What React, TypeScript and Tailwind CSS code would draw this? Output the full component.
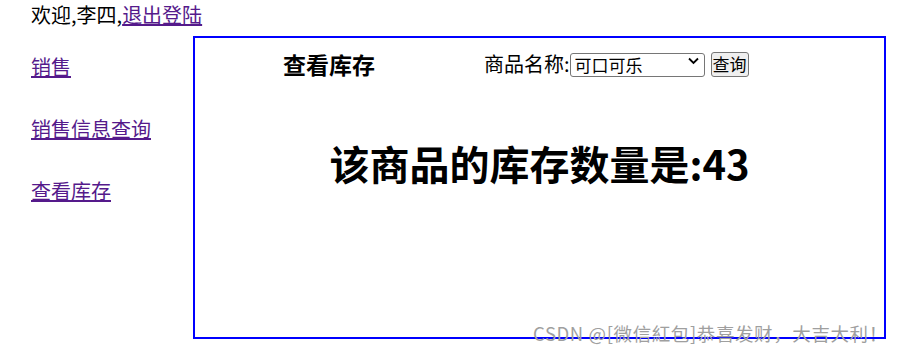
import { useState } from "react";

const font = "font-['Microsoft_YaHei','Noto_Sans_CJK_SC','Noto_Sans',sans-serif]";

const App = () => {
    const [goods, setGoods] = useState<string>("可口可乐");

    return (
        <div className={`relative h-[355px] w-[905px] overflow-hidden bg-white text-[20px] text-black ${font}`}>
            {/* header */}
            <div className="h-[30px] pl-[31px] leading-[30px]">
                欢迎,李四,
                <a href="#" className="text-[#551a8b] underline">退出登陆</a>
            </div>

            <div className="mt-[6px] flex">
                {/* left menu */}
                <div className="flex w-[193px] shrink-0 flex-col items-start gap-[36px] pl-[31px] pt-[18px]">
                    <a href="#" className="leading-[26px] text-[#551a8b] underline">销售</a>
                    <a href="#" className="leading-[26px] text-[#551a8b] underline">销售信息查询</a>
                    <a href="#" className="leading-[26px] text-[#551a8b] underline">查看库存</a>
                </div>

                {/* content */}
                <div className="flex h-[303px] w-[693px] shrink-0 flex-col border-2 border-[#0000ff]">
                    <div className="mt-[12px] flex h-[28px] items-center">
                        <div className="w-[289px] pl-[88px] text-[23px] font-bold leading-[28px]">查看库存</div>
                        <div className="flex items-center">
                            <span className="leading-[28px]">商品名称:</span>
                            <div className="relative">
                                <select
                                    value={goods}
                                    onChange={(e) => setGoods(e.target.value)}
                                    className="h-[24px] w-[135px] appearance-none rounded-[3px] border border-[#767676] bg-white pl-[4px] text-[17px] leading-[22px]"
                                >
                                    <option>可口可乐</option>
                                    <option>百事可乐</option>
                                    <option>雪碧</option>
                                </select>
                                <svg className="pointer-events-none absolute right-[6px] top-[8px]" width="11" height="8" viewBox="0 0 11 8">
                                    <path d="M1 1.5 L5.5 6 L10 1.5" fill="none" stroke="#000" strokeWidth="1.8" />
                                </svg>
                            </div>
                            <button className="ml-[6px] h-[25px] w-[38px] rounded-[3px] border border-[#767676] bg-[#efefef] text-[17px] leading-[22px]">
                                查询
                            </button>
                        </div>
                    </div>

                    <h1 className="mt-[61px] text-center text-[40px] font-bold leading-[48px]">该商品的库存数量是:43</h1>
                </div>
            </div>

            {/* watermark */}
            <div className="absolute left-[533px] top-[320px] whitespace-nowrap text-[18.5px] leading-[26px] tracking-[0.6px] text-[#9f9f9f]">
                CSDN @[微信紅包]恭喜发财，大吉大利！
            </div>
        </div>
    );
};

export default App;
